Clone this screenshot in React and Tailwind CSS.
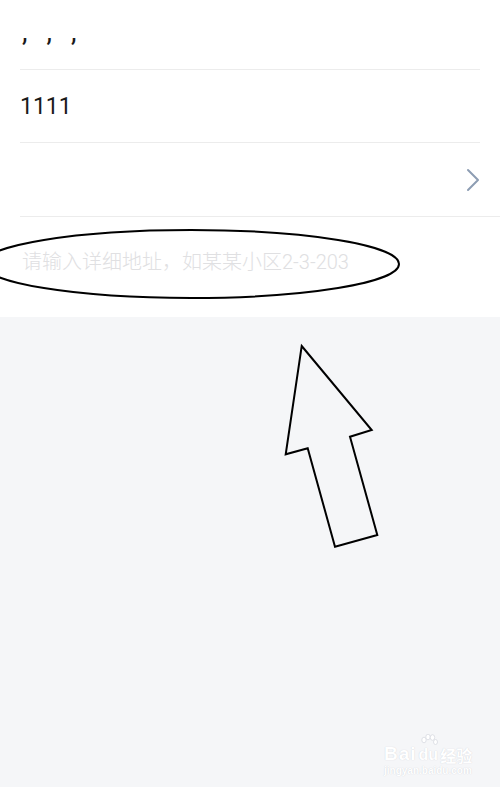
import React from 'react';

function Chevron() {
  return (
    <svg width="14" height="24" viewBox="0 0 14 24" fill="none">
      <path d="M2 2l10 10-10 10" stroke="#8d9db3" strokeWidth="2" strokeLinecap="round" strokeLinejoin="round" />
    </svg>
  );
}

function Paw() {
  return (
    <svg width="20" height="18" viewBox="0 0 20 18" className="absolute left-0 -top-[13px]">
      <g fill="#ffffff" stroke="#d8dbe1" strokeWidth="0.8">
        <ellipse cx="5" cy="6" rx="2.2" ry="2.8" />
        <ellipse cx="9" cy="3" rx="2.2" ry="2.8" />
        <ellipse cx="13.5" cy="3.5" rx="2.2" ry="2.8" />
        <ellipse cx="16.5" cy="8" rx="2" ry="2.5" />
      </g>
    </svg>
  );
}

export default function App() {
  return (
    <div className="relative w-[500px] h-[787px] overflow-hidden bg-[#f5f6f8] font-['Roboto','Noto_Sans_CJK_SC',sans-serif]">
      {/* form */}
      <div className="bg-white">
        <div className="h-[70px] ml-5 mr-5 border-b border-[#ececec] flex items-center">
          <div className="flex gap-[19px] pl-[2px] -mt-[6px] text-[28px] leading-none text-[#1a1a1a]">
            <span>,</span>
            <span>,</span>
            <span>,</span>
          </div>
        </div>
        <div className="h-[73px] ml-5 mr-5 border-b border-[#ececec] flex items-center">
          <span className="text-[23px] leading-none text-[#1a1a1a]">1111</span>
        </div>
        <div className="h-[74px] ml-5 border-b border-[#ececec] flex items-center justify-end pr-5">
          <Chevron />
        </div>
        <div className="h-[100px] pl-[22px] pt-[31px]">
          <span className="text-[20px] leading-[28px] font-light text-[#e0e0e2]">请输入详细地址，如某某小区2-3-203</span>
        </div>
      </div>

      {/* annotations drawn over the screenshot */}
      <svg className="absolute inset-0 pointer-events-none" width="500" height="787" viewBox="0 0 500 787">
        <ellipse cx="191" cy="264" rx="208" ry="34" fill="none" stroke="#000" strokeWidth="2" />
        <polygon
          points="301.7,346 371.7,430 350,436.7 377.3,535 335,546.7 307.7,448.3 285.7,454.3"
          fill="none"
          stroke="#000"
          strokeWidth="2"
          strokeLinejoin="miter"
        />
      </svg>

      {/* watermark */}
      <div className="absolute left-[384px] top-[744px] flex flex-col text-white [text-shadow:0_0_1px_#c9ccd3]">
        <div className="flex items-end leading-none">
          <span className="text-[19px] font-bold font-['Liberation_Sans',sans-serif] tracking-[1px]">Bai</span>
          <span className="relative text-[16px] font-bold font-['Liberation_Sans',sans-serif] ml-[2px]">
            <Paw />
            du
          </span>
          <span className="text-[16px] font-bold ml-[2px] font-['Noto_Sans_CJK_SC',sans-serif]">经验</span>
        </div>
        <span className="text-[10px] leading-none mt-[3px] font-bold font-['Liberation_Sans',sans-serif]">jingyan.baidu.com</span>
      </div>
    </div>
  );
}
